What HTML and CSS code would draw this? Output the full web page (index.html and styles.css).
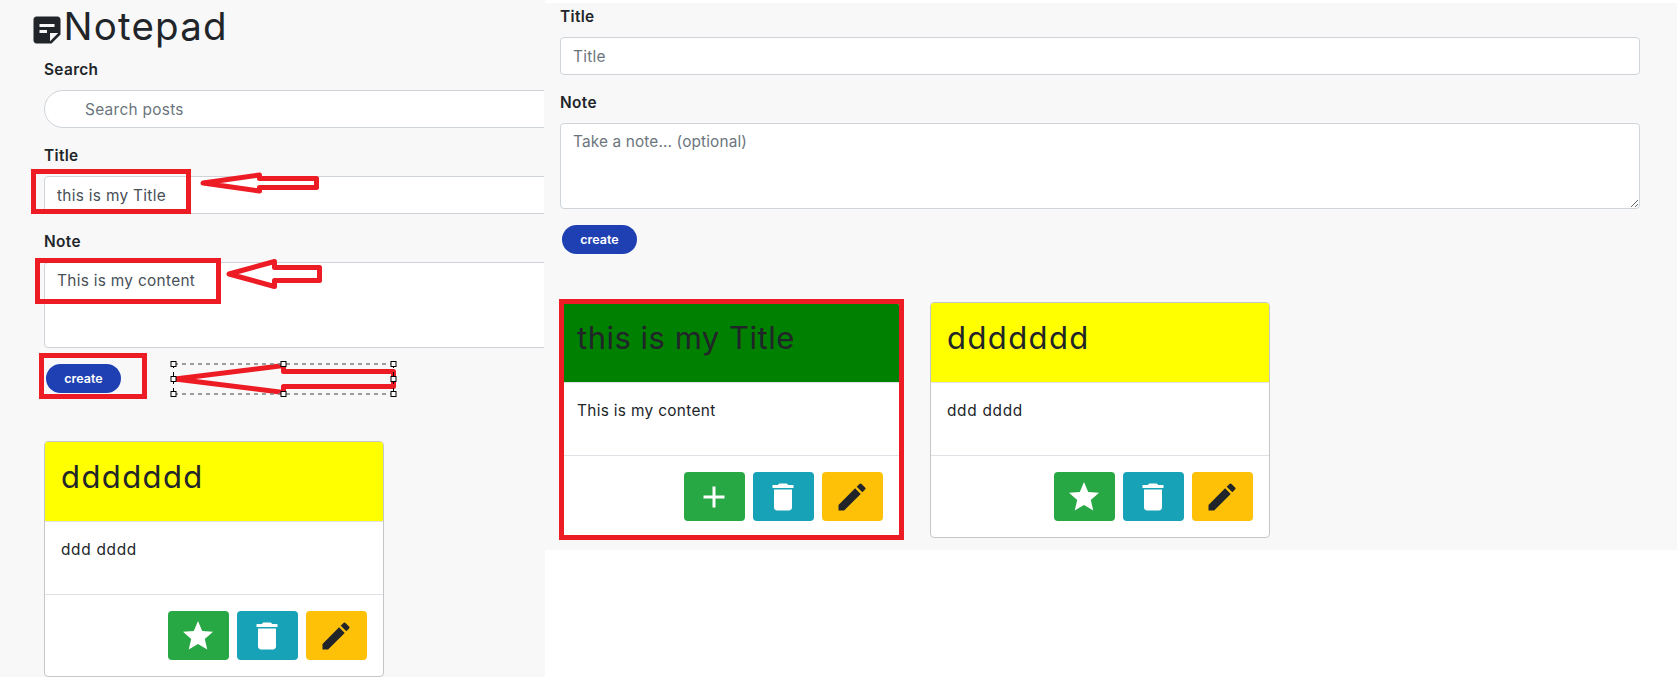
FILE: index.html
```html
<!DOCTYPE html>
<html lang="en">
<head>
<meta charset="utf-8">
<title>Notepad</title>
<link rel="stylesheet" href="styles.css">
</head>
<body>
<svg class="defs" aria-hidden="true">
  <symbol id="i-note" viewBox="0 0 24 24"><path d="M19 3H4.99C3.89 3 3 3.9 3 5l.01 14c0 1.1.89 2 1.99 2h10l6-6V5c0-1.1-.9-2-2-2zM7 8h10v2H7V8zm5 6H7v-2h5v2zm2 5.500V14h5.500L14 19.500z"/></symbol>
  <symbol id="i-star" viewBox="0 0 24 24"><path d="M12 17.270L18.180 21l-1.640-7.030L22 9.240l-7.190-.61L12 2 9.190 8.630 2 9.240l5.460 4.730L5.820 21z"/></symbol>
  <symbol id="i-add" viewBox="0 0 24 24"><path d="M19 13h-6v6h-2v-6H5v-2h6V5h2v6h6v2z"/></symbol>
  <symbol id="i-delete" viewBox="0 0 24 24"><path d="M6 19c0 1.100.9 2 2 2h8c1.100 0 2-.9 2-2V7H6v12zM19 4h-3.500l-1-1h-5l-1 1H5v2h14V4z"/></symbol>
  <symbol id="i-edit" viewBox="0 0 24 24"><path d="M3 17.250V21h3.750L17.810 9.940l-3.750-3.750L3 17.250zM20.710 7.040a1 1 0 0 0 0-1.410l-2.340-2.340a1 1 0 0 0-1.410 0l-1.830 1.830 3.750 3.750 1.830-1.830z"/></symbol>
</svg>
<div class="page">
  <section class="pane pane-left">
    <h1 class="brand"><svg class="icon"><use href="#i-note"/></svg><span>Notepad</span></h1>
    <form class="form">
      <label class="label label-search">Search</label>
      <input class="control search" placeholder="Search posts">
      <label class="label">Title</label>
      <input class="control" value="this is my Title">
      <label class="label">Note</label>
      <textarea class="control area">This is my content</textarea>
      <button type="button" class="create">create</button>
    </form>
    <div class="cards">
      <article class="card">
        <header class="card-head yellow"><h2>ddddddd</h2></header>
        <p class="card-body">ddd dddd</p>
        <footer class="card-foot">
          <button class="btn green-btn"><svg class="icon"><use href="#i-star"/></svg></button>
          <button class="btn teal-btn"><svg class="icon"><use href="#i-delete"/></svg></button>
          <button class="btn amber-btn"><svg class="icon"><use href="#i-edit"/></svg></button>
        </footer>
      </article>
    </div>
  </section>
  <section class="pane pane-right">
    <form class="form">
      <label class="label">Title</label>
      <input class="control" placeholder="Title">
      <label class="label">Note</label>
      <textarea class="control area" placeholder="Take a note... (optional)"></textarea>
      <button type="button" class="create">create</button>
    </form>
    <div class="cards">
      <article class="card">
        <header class="card-head green"><h2 class="words">this is my Title</h2></header>
        <p class="card-body words">This is my content</p>
        <footer class="card-foot">
          <button class="btn green-btn"><svg class="icon"><use href="#i-add"/></svg></button>
          <button class="btn teal-btn"><svg class="icon"><use href="#i-delete"/></svg></button>
          <button class="btn amber-btn"><svg class="icon"><use href="#i-edit"/></svg></button>
        </footer>
      </article>
      <article class="card">
        <header class="card-head yellow"><h2>ddddddd</h2></header>
        <p class="card-body">ddd dddd</p>
        <footer class="card-foot">
          <button class="btn green-btn"><svg class="icon"><use href="#i-star"/></svg></button>
          <button class="btn teal-btn"><svg class="icon"><use href="#i-delete"/></svg></button>
          <button class="btn amber-btn"><svg class="icon"><use href="#i-edit"/></svg></button>
        </footer>
      </article>
    </div>
  </section>
  <svg class="marks" viewBox="0 0 1677 677">
    <g class="red">
      <rect x="33.500" y="171.500" width="155" height="40"/>
      <rect x="37.500" y="260.500" width="181" height="41"/>
      <rect x="41.500" y="355.500" width="103" height="41"/>
      <rect x="561.500" y="301.500" width="340" height="236"/>
      <path d="M203 183L259.500 175V178.500H316.500V187.500H259.500V191Z"/>
      <path d="M229 274L274.500 261.500V267.500H319.500V280.500H274.500V286.500Z"/>
      <path d="M175 379L283.500 365.500V371.500H393.500V386.500H283.500V392.500Z"/>
    </g>
    <path class="dash" d="M174 364H394M174 394H394"/>
    <path class="dash side" d="M173.500 364V394M393.500 364V394"/>
    <g class="handles">
      <rect x="171" y="361.500" width="5" height="5"/><rect x="281" y="361.500" width="5" height="5"/><rect x="391" y="361.500" width="5" height="5"/>
      <rect x="171" y="376.500" width="5" height="5"/><rect x="391" y="376.500" width="5" height="5"/>
      <rect x="171" y="391.500" width="5" height="5"/><rect x="281" y="391.500" width="5" height="5"/><rect x="391" y="391.500" width="5" height="5"/>
    </g>
  </svg>
</div>
</body>
</html>
```
FILE: styles.css
```css
* { box-sizing: border-box; }
body { margin: 0; background: #fff; color: #212529; font: 15.400px/24px Inter, sans-serif; overflow: hidden; }
h1, h2, p { margin: 0; font-weight: 400; }
.defs { display: none; }
.page { position: relative; display: flex; align-items: flex-start; width: 1677px; height: 677px; overflow: hidden; }
.pane { background: #f8f8f8; overflow: hidden; }
.pane-left { flex: none; width: 545px; height: 677px; padding: 2px 1px 0 44px; }
.pane-right { flex: 1; height: 550px; border-top: 3px solid #fff; padding: 2px 37px 0 15px; }
.icon { display: block; flex: none; width: 36px; height: 36px; fill: currentColor; }
.brand { display: flex; height: 48px; margin: 0 0 8px -15.5px; font-size: 38.500px; line-height: 48px; letter-spacing: 1.200px; }
.brand .icon { margin: 9.500px -1px 0 0; }
.form { display: flex; flex-direction: column; align-items: flex-start; overflow: hidden; }
.label { font-weight: 600; margin-bottom: 8px; letter-spacing: .35px; }
.control { display: block; width: 100%; height: 38px; margin: 0 0 16px; padding: 6px 12px; border: 1px solid #ced4da; border-radius: 4px; background: #fff; color: #495057; font: inherit; letter-spacing: .3px; }
.control::placeholder { color: #6c757d; opacity: 1; }
.area::placeholder { letter-spacing: .13px; }
.pane-left .control { width: 560px; }
.search { padding-left: 40px; border-radius: 19px; }
.area { height: 86px; resize: vertical; overflow: hidden; }
.create { width: 75px; height: 29px; margin-left: 2px; padding: 0; border: 0; border-radius: 15px; background: #1f40b3; color: #fff; font: 600 12.500px/29px Inter, sans-serif; }
.cards { display: flex; gap: 30px; margin-top: 48px; }
.card { width: 340px; height: 236px; border: 1px solid #c5c6c8; border-radius: 4px; background: #fff; overflow: hidden; }
.card-head { height: 80px; padding: 16px; border-bottom: 1px solid #dee2e6; }
.card-head h2 { font-size: 31px; line-height: 38px; letter-spacing: 1.400px; }
.card-head .words { letter-spacing: .5px; }
.yellow { background: #ff0; background-clip: padding-box; }
.green { background: #008000; background-clip: padding-box; }
.card-body { height: 72px; padding: 16px; letter-spacing: .7px; }
.card-body.words { letter-spacing: .32px; }
.card-foot { display: flex; justify-content: flex-end; gap: 8px; height: 82px; padding: 16px; border-top: 1px solid #dee2e6; }
.btn { display: flex; width: 61px; height: 49px; padding: 6.500px 12px 0; border: 0; border-radius: 4px; color: #fff; }
.green-btn { background: #28a745; }
.teal-btn { background: #17a2b8; }
.amber-btn { background: #ffc107; color: #212529; }
/* annotation layer */
.marks { position: absolute; left: 0; top: 0; width: 1677px; height: 677px; pointer-events: none; }
.red { fill: none; stroke: #ed1c24; stroke-width: 5; }
.red path { stroke-linejoin: round; }
.dash { fill: none; stroke: #7f7f7f; stroke-width: 1.500; stroke-dasharray: 4 4; }
.side { stroke: #000; stroke-width: 1; }
.handles rect { fill: #fff; stroke: #000; stroke-width: 1; }
```
